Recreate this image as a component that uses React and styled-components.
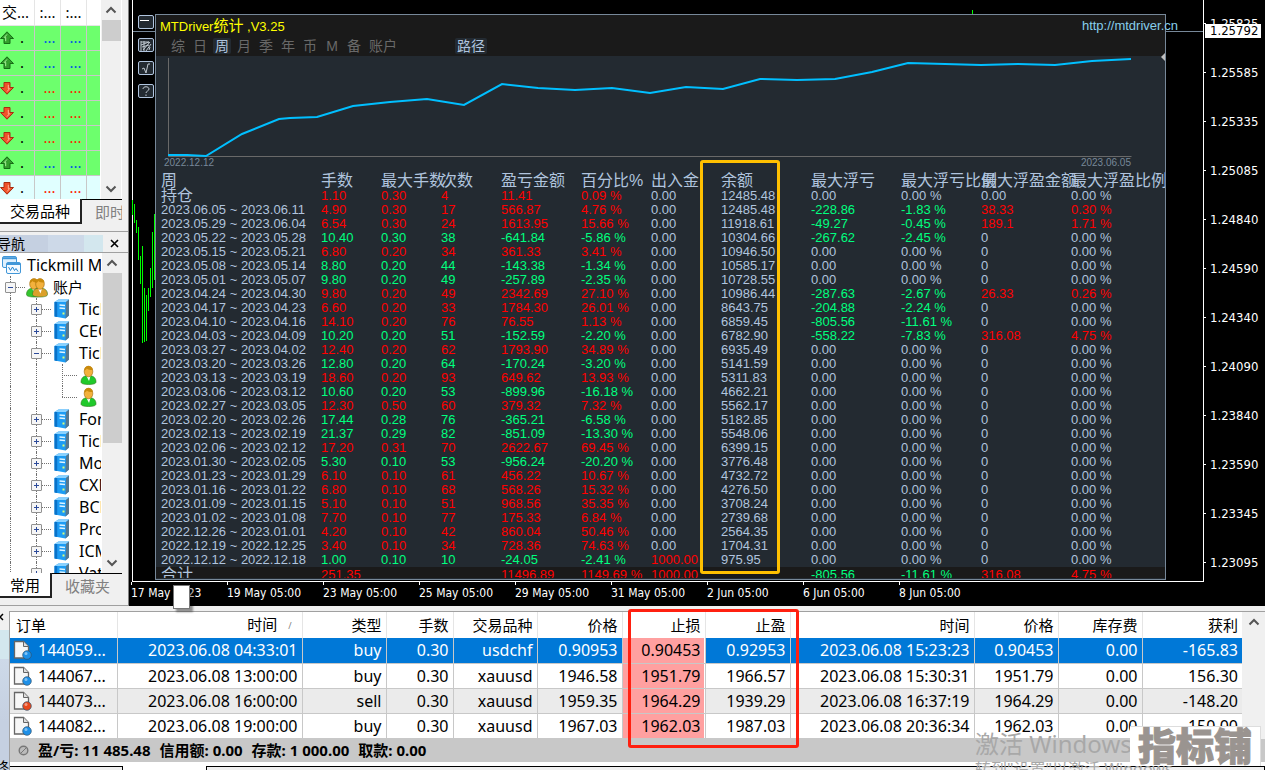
import React from 'react'
import styled, { createGlobalStyle, css } from 'styled-components'

const GlobalStyle = createGlobalStyle`
  * {
    box-sizing: border-box;
  }
  body {
    margin: 0;
    background: #f0f0f0;
    color: #000;
    font-family: 'Noto Sans', 'Noto Sans CJK SC', sans-serif;
    font-size: 15px;
    line-height: 20px;
  }
  button {
    margin: 0;
    padding: 0;
    border: 0;
    background: none;
    color: inherit;
    font: inherit;
    white-space: nowrap;
  }
  table {
    border-collapse: collapse;
    border-spacing: 0;
    table-layout: fixed;
  }
  th, td {
    padding: 0;
    font-weight: normal;
    text-align: left;
    white-space: nowrap;
  }
  svg {
    display: block;
    flex: none;
  }
`

const Page = styled.div`
  display: flex;
  flex-direction: column;
  height: 100vh;
  overflow: hidden;
`

const Workspace = styled.div`
  display: flex;
  flex: none;
`

/* ---------- sidebar ---------- */

const Sidebar = styled.aside`
  display: flex;
  flex-direction: column;
  width: 129px;
  flex: none;
  border-right: 1px solid #808080;
  border-bottom: 1px solid #a0a0a0;
  background: #f0f0f0;
`

const Scrolled = styled.div`
  display: flex;
  height: ${props => props.$height};
  width: 122px;
  overflow: hidden;
  background: #fff;
`

const ScrollBar = styled.div`
  display: flex;
  flex-direction: column;
  align-items: center;
  width: 20px;
  flex: none;
  margin-left: 1px;
  background: #f0f0f0;
`

const ScrollButton = styled.button`
  display: flex;
  align-items: center;
  justify-content: center;
  width: 20px;
  height: 20px;
  flex: none;
`

const Thumb = styled.div`
  width: 19px;
  height: ${props => props.$size};
  margin-bottom: auto;
  background: #cdcdcd;
`

const WatchTable = styled.table`
  width: 100px;
  flex: none;
  th, td {
    height: 25px;
    overflow: hidden;
    border-right: 1px solid #c8c8c8;
    border-bottom: 1px solid #c8c8c8;
    text-align: right;
    padding-right: 4px;
    line-height: 23px;
  }
  th {
    border-color: #e5e5e5;
    background: #fff;
    padding-left: 2px;
    text-align: left;
  }
  th + th {
    padding-left: 5px;
  }
  th:last-child, td:last-child {
    border-right: 0;
  }
`

const WatchRow = styled.tr`
  background: ${props => (props.$plain ? '#e0ffff' : '#6dff6d')};
  color: ${props => (props.$up ? '#0055e0' : '#ff1800')};
`

const Symbol = styled.div`
  display: flex;
  align-items: center;
  gap: 6px;
  color: #000;
`

const Tabs = styled.div`
  display: flex;
  width: 122px;
  height: 25px;
  overflow: hidden;
  background: #f0f0f0;
`

const Tab = styled.button`
  flex: none;
  padding: 0 10px;
  ${props =>
    props.$active
      ? css`
          border-right: 2px solid #222;
          border-bottom: 2px solid #222;
          background: #fff;
        `
      : css`
          flex: 1;
          padding-left: 13px;
          border-top: 1px solid #000;
          color: #808080;
          text-align: left;
        `}
`

const NavTitle = styled.div`
  display: flex;
  align-items: center;
  justify-content: space-between;
  margin-top: 7px;
  height: 22px;
  padding: 3px 9px 0 0;
  border-top: 1px solid #a0a0a0;
  border-bottom: 1px solid #a0a0a0;
  overflow: hidden;
  font-size: 14px;
`

const NavName = styled.span`
  width: 103px;
  height: 17px;
  line-height: 17px;
  text-indent: -3px;
  background: linear-gradient(90deg, #c5d0e1 48px, #cdd9e8 48px, #cdd9e8 84px, #d3e7ee 84px);
`

const Tree = styled.div`
  flex: 1;
  padding-top: 1px;
  overflow: hidden;
`

const Node = styled.div`
  display: flex;
  align-items: center;
  height: 22px;
  white-space: nowrap;
`

const NodeName = styled.span`
  font-size: 16px;
`

const Guide = styled.span`
  position: relative;
  display: flex;
  align-items: center;
  width: 26px;
  height: 22px;
  flex: none;
  padding-left: 5px;
  &::before {
    content: '';
    position: absolute;
    left: 10px;
    top: 0;
    bottom: ${props => (props.$last ? '11px' : '0')};
    border-left: 1px dotted #707070;
  }
  &::after {
    content: '';
    position: absolute;
    left: 10px;
    right: 1px;
    top: 11px;
    border-top: ${props => (props.$branch ? '1px dotted #707070' : '0')};
  }
`

const Expander = styled.button`
  position: relative;
  z-index: 1;
  width: 11px;
  height: 11px;
  border: 1px solid #919191;
  border-radius: 1px;
  background: #f6f6f6;
`

const NodeIcon = styled.span`
  flex: none;
  width: ${props => props.$width};
  padding-left: ${props => props.$pad || '0'};
`

/* ---------- price chart ---------- */

const ChartWindow = styled.section`
  flex: 1;
  min-width: 0;
  padding-left: 3px;
  background: #000;
  color: #fff;
  font-family: 'DejaVu Sans Condensed', 'DejaVu Sans', sans-serif;
`

const ChartRow = styled.div`
  display: flex;
`

const Plot = styled.div`
  position: relative;
  display: flex;
  flex: 1;
  min-width: 0;
  padding: 14px 37px 1px 0;
  border: solid #fff;
  border-width: 0 1px 1px;
`

const QuoteLine = styled.div`
  position: absolute;
  left: 0;
  right: 0;
  top: 31px;
  height: 1px;
  background: #778899;
`

const Candles = styled.svg`
  position: absolute;
  left: -1px;
  top: 0;
`

const TopTick = styled.span`
  position: absolute;
  right: 230px;
  top: 10px;
  width: 1px;
  height: 4px;
  background: #0f0;
`

const ToolColumn = styled.div`
  position: relative;
  display: flex;
  flex-direction: column;
  gap: 9px;
  width: 22px;
  padding: 1px 0 0 5px;
`

const Tool = styled.button`
  width: 16px;
  height: 14px;
  border: 1px solid #b0c4de;
  border-radius: 2px;
  background: #232a31;
`

const Panel = styled.div`
  position: relative;
  flex: 1;
  min-width: 0;
  border: 1px solid #778899;
  background: #232a31;
  color: #b0c4de;
  font-family: 'Liberation Sans', 'Noto Sans CJK SC', sans-serif;
  font-size: 13px;
  line-height: 14px;
`

const PanelHead = styled.header`
  height: 41px;
  background: #1a1a1a;
`

const TitleRow = styled.div`
  display: flex;
  justify-content: space-between;
  height: 23px;
  padding-left: 4px;
  line-height: 22px;
  color: #ff0;
  a {
    margin-right: -13px;
    color: #87ceeb;
    text-decoration: none;
    z-index: 1;
  }
`

const TitleCjk = styled.span`
  font-size: 15px;
`

const PeriodRow = styled.div`
  display: flex;
  padding-left: 13px;
`

const Period = styled.button`
  min-width: 18px;
  height: 16px;
  margin-right: 4px;
  padding: 0 2px;
  border-radius: 2px;
  background: ${props => (props.$active ? '#232a31' : 'none')};
  color: ${props => (props.$active ? '#b0c4de' : '#696969')};
  font-size: 14px;
  line-height: 16px;
`

const PathPeriod = styled(Period)`
  margin-left: 52px;
`

const Growth = styled.figure`
  margin: 0;
  padding: 1px 34px 0 12px;
  height: 116px;
  svg {
    width: 100%;
    height: 100px;
    overflow: visible;
  }
`

const Dates = styled.figcaption`
  display: flex;
  justify-content: space-between;
  margin-left: -4px;
  color: #778899;
  font-family: 'Liberation Sans Narrow', 'Liberation Sans', sans-serif;
  font-size: 10px;
  line-height: 12px;
`

const StatsClip = styled.div`
  height: 406px;
  overflow: hidden;
`

const StatsTable = styled.table`
  width: 100%;
  th, td {
    height: 14px;
  }
  th, td:first-child {
    padding-left: 5px;
  }
  thead th {
    height: 17px;
    padding: 1px 0 0;
    font-size: 16px;
  }
  thead th:first-child {
    padding-left: 5px;
  }
  tfoot {
    background: #1a1a1a;
  }
  tfoot th, tfoot td {
    height: 15px;
  }
`

const RowName = styled.th`
  font-size: ${props => (props.$cjk ? '16px' : '13px')};
`

const tones = { r: '#f00', g: '#00ff7f', n: '#b0c4de' }

const Stat = styled.td`
  color: ${props => tones[props.$tone]};
`

const BalanceMark = styled.div`
  position: absolute;
  left: 544px;
  top: 145px;
  width: 80px;
  bottom: 5px;
  border: 3px solid #ffc000;
  border-radius: 3px;
`

const EdgeMark = styled.svg`
  position: absolute;
  right: 0;
  top: 38px;
`

const PriceAxis = styled.div`
  position: relative;
  width: 61px;
  flex: none;
  height: 582px;
  overflow: hidden;
  ol {
    margin: -1px 0 0;
    padding: 0;
    list-style: none;
  }
`

const Price = styled.li`
  display: flex;
  align-items: center;
  gap: 4px;
  height: 49px;
  font-size: 13px;
  &::before {
    content: '';
    width: 2px;
    height: 1px;
    background: #fff;
  }
`

const LastPrice = styled.div`
  position: absolute;
  left: 1px;
  top: 24px;
  width: 56px;
  padding-left: 5px;
  background: #fff;
  color: #000;
  font-size: 13px;
  line-height: 14px;
`

const TimeAxis = styled.div`
  position: relative;
  display: flex;
  height: 24px;
  margin-left: -1px;
`

const Time = styled.span`
  width: 96px;
  flex: none;
  font-size: 12px;
  line-height: 17px;
  white-space: nowrap;
  &::before {
    content: '';
    display: block;
    width: 1px;
    height: 3px;
    background: #fff;
  }
`

const DragHandle = styled.div`
  position: absolute;
  left: 42px;
  top: 3px;
  z-index: 2;
  width: 17px;
  height: 24px;
  border: 1px solid #777;
  background: #fff;
  box-shadow: 3px 3px 2px rgba(0, 0, 0, 0.4);
`

/* ---------- terminal ---------- */

const Terminal = styled.section`
  position: relative;
  display: flex;
  flex: 1;
  margin-top: 5px;
  min-height: 0;
`

const Rail = styled.div`
  display: flex;
  flex-direction: column;
  justify-content: space-between;
  width: 9px;
  flex: none;
  overflow: hidden;
  background: linear-gradient(#f0f0f0 19px, #d3e7ee 19px, #d3e7ee 48px, #cdd9e8 48px, #c5d0e1 110px);
`

const RailName = styled.span`
  height: 10px;
  font-size: 14px;
  line-height: 14px;
  text-indent: -5px;
  white-space: nowrap;
`

const TerminalBody = styled.div`
  display: flex;
  flex-direction: column;
  flex: 1;
  min-width: 0;
  border-top: 1px solid #a0a0a0;
  border-left: 1px solid #a0a0a0;
  background: #fff;
`

const OrdersArea = styled.div`
  display: flex;
`

const OrdersTable = styled.table`
  flex: 1;
  width: 100%;
  background: #fff;
  th, td {
    height: 25px;
    padding-right: 4px;
    border-right: 1px solid #c8c8c8;
    text-align: right;
    font-size: 16px;
    line-height: 24px;
  }
  td {
    border-bottom: 1px solid #c8c8c8;
  }
  th {
    height: 26px;
    border-color: #e5e5e5;
    font-size: 15px;
  }
  th:first-child {
    padding-left: 6px;
    text-align: left;
  }
  th:last-child, td:last-child {
    border-right: 0;
  }
`

const OrderRow = styled.tr`
  background: ${props => (props.$selected ? '#0078d7' : props.$alt ? '#ebebeb' : '#fff')};
  color: ${props => (props.$selected ? '#fff' : '#000')};
`

const Ticket = styled.div`
  display: flex;
  align-items: center;
  gap: 6px;
  height: 24px;
  padding-left: 3px;
`

const StopLoss = styled.td`
  background: #ffa0a0;
  color: #000;
  box-shadow: inset -1px 0 #fff;
`

const SortMark = styled.span`
  padding: 0 6px 0 11px;
  color: #808080;
  font-size: 9px;
  vertical-align: 1px;
`

const Summary = styled.div`
  display: flex;
  align-items: center;
  gap: 9px;
  height: 25px;
  padding-left: 8px;
  background: #c8c8c8;
  font-weight: bold;
  white-space: nowrap;
`

const BottomTabs = styled.div`
  display: flex;
  margin-top: 4px;
  height: 4px;
`

const BottomTab = styled.div`
  width: ${props => props.$width};
  flex: ${props => (props.$width ? 'none' : '1')};
  border: solid #000;
  border-width: 1px 1px 0 0;
  background: #f0f0f0;
`

const ActiveBottomTab = styled.div`
  width: 84px;
  border-right: 1px solid #000;
`

const TerminalScroll = styled(ScrollBar)`
  width: 23px;
  margin: 0;
`

const StopMark = styled.div`
  position: absolute;
  left: 628px;
  top: -2px;
  width: 171px;
  height: 139px;
  border: 3px solid #ff2010;
  border-radius: 3px;
`

const Activation = styled.div`
  position: absolute;
  right: 66px;
  bottom: -10px;
  width: 224px;
  color: #a8a8a8;
  font-size: 16px;
  line-height: 22px;
  white-space: nowrap;
  strong {
    display: block;
    font-size: 24px;
    font-weight: normal;
    line-height: 28px;
  }
`

const Brand = styled.div`
  position: absolute;
  right: 4px;
  bottom: 4px;
  height: 40px;
  padding: 0 8px;
  border-top: 1px solid #ddd;
  border-right: 1px solid #ddd;
  background: #fff;
  color: #9a9490;
  font-family: 'Noto Sans CJK SC', sans-serif;
  font-size: 38px;
  font-weight: 900;
  line-height: 34px;
  -webkit-text-stroke: 1px #9a9490;
`

/* ---------- icons ---------- */

const Chevron = ({ down }) => (
  <svg width="12" height="8" viewBox="0 0 12 8">
    <path d={down ? 'M1.5 1.5 6 6l4.5-4.5' : 'M1.5 6.5 6 2l4.5 4.5'} fill="none" stroke="#555" strokeWidth="2" />
  </svg>
)

const Arrow = ({ up }) => (
  <svg width="14" height="14" viewBox="0 0 14 14">
    <g transform={up ? undefined : 'rotate(180 7 7)'}>
      <path d="M7 .8 13.500 7.500H10v5H4v-5H.5z" fill={up ? '#33a02c' : '#f0522a'} stroke={up ? '#176b17' : '#a82c10'} />
      <path d="M7 3.400 4.400 6.400h1.300v3.800" fill="none" stroke={up ? '#a9f09b' : '#ffb597'} />
    </g>
  </svg>
)

const ServerIcon = () => (
  <svg width="16" height="20" viewBox="0 0 16 20">
    <path d="M.5 3 4.500.5H15v16L11.500 19.500.5 17.500z" fill="#1c9cf4" />
    <path d="M.5 3 4.500.5H15L12 3z" fill="#8ad2ff" />
    <path d="M12 3 15 .5v16l-3.500 3z" fill="#56788f" />
    <path d="M.5 3h2.700v15L.5 17.500z" fill="#0a72c8" />
    <path d="M5.500 6 11 6.500M5.500 9 11 9.500" stroke="#dff4ff" strokeWidth="1.400" />
    <path d="M8.500 14.500h2" stroke="#d9ff7a" strokeWidth="2" />
  </svg>
)

const TerminalIcon = () => (
  <svg width="20" height="20" viewBox="0 0 20 20">
    <rect x="1.5" y="1.5" width="14" height="11" rx="1.5" fill="#dff0fd" stroke="#4197d8" />
    <path d="M2 3.2h13" stroke="#4197d8" strokeWidth="2" />
    <rect x="5.5" y="7.5" width="14" height="11" rx="1.5" fill="#f4faff" stroke="#4197d8" />
    <path d="M6 9h13" stroke="#4197d8" strokeWidth="2" />
    <path d="m7.5 12 2 3.5 2-3.500 2 3.500 1.500-2 2 3" fill="none" stroke="#2384cf" />
  </svg>
)

const Person = ({ body }) => (
  <g>
    <path d="M.5 17c0-4 2.500-6.500 7.500-6.500s7.500 2.500 7.500 6.500c0 1.500-2.500 2.500-7.500 2.500S.5 18.500.5 17z" fill={body} stroke="#2f7a1d" strokeWidth=".6" />
    <path d="m6 11 2.500 5L10 11z" fill="#fff" />
    <ellipse cx="8" cy="6.500" rx="4.300" ry="5.300" fill="#f3b13c" stroke="#9a6508" strokeWidth=".6" />
    <path d="M3.800 5.500C3.800 2 6 1 8 1s4.300 1 4.300 4c-3 0-5-.5-6-1.500-.3 1-1.300 1.700-2.500 2z" fill="#c98a0c" />
  </g>
)

const UserIcon = () => (
  <svg width="17" height="20" viewBox="0 0 16 20"><Person body="#20c92b" /></svg>
)

const UsersIcon = () => (
  <svg width="22" height="21" viewBox="0 0 22 20">
    <Person body="#35c52f" />
    <g transform="translate(6 0)"><Person body="#dba02a" /></g>
  </svg>
)

const OrderIcon = ({ color }) => (
  <svg width="19" height="20" viewBox="0 0 19 20">
    <path d="M1.500 1.500h9l5 5v11.500h-14z" fill="#f7f7f7" stroke="#666" strokeWidth="1.300" />
    <path d="M10.500 1.500v5h5" fill="#ddd" stroke="#666" />
    <circle cx="14" cy="15" r="4.300" fill={color} stroke="#31536e" strokeWidth=".7" />
    <circle cx="13" cy="13.500" r="1.500" fill="#fff" opacity=".45" />
  </svg>
)

const toolPaths = {
  minimize: 'M1 4.500h9',
  chart: 'M2 2v10M2 3h8M5 2v10M2 6l8-3M4 11l7-8M3 8l7-2M7 12l5-7M10 11l1-3',
  check: 'M3 7l2-1 2 5 2-9h2',
  help: 'M4 4C4 1 10 1 10 4c0 2-3 2-3 4M7 9.500V11',
}

/* ---------- data ---------- */

const watch = [true, true, false, false, false, true, false]

const servers = ['For', 'Tickmill', 'Monex', 'CXM', 'BCR', 'Pro', 'ICMarkets', 'Vatee']

const prices = ['1.25825', '1.25585', '1.25335', '1.25085', '1.24840', '1.24590', '1.24340', '1.24090', '1.23840', '1.23590', '1.23345', '1.23095']

const times = ['17 May 2023', '19 May 05:00', '23 May 05:00', '25 May 05:00', '29 May 05:00', '31 May 05:00', '2 Jun 05:00', '6 Jun 05:00', '8 Jun 05:00']

// x, top, bottom
const candles = [
  [0, 200, 215], [2, 204, 223], [4, 220, 233], [6, 227, 260], [8, 256, 284], [10, 246, 343],
  [12, 288, 342], [14, 295, 341], [16, 288, 311], [18, 268, 297], [20, 232, 288], [22, 214, 280],
]

const growth = '0,98 19,98 38,99 74,77 111,62 122,61 149,60 185,49 222,45 259,42 296,48 334,27 370,31 407,33 444,31 482,36 518,30 555,32 592,22 629,23 667,22 704,15 740,6 777,7 813,8 850,7 887,8 924,4 963,2'

const periods = ['综', '日', '周', '月', '季', '年', '币', 'M', '备', '账户']

const summary = ['盈/亏: 11 485.48', '信用额: 0.00', '存款: 1 000.00', '取款: 0.00']

const statHeads = ['周', '手数', '最大手数', '次数', '盈亏金额', '百分比%', '出入金', '余额', '最大浮亏', '最大浮亏比例', '最大浮盈金额', '最大浮盈比例']
const statWidths = [165, 60, 60, 60, 80, 70, 70, 90, 90, 80, 90]

// name|lots|max lots|count|profit|percent|balance|drawdown|drawdown %|float profit|float profit %
const stats = `持仓|1.10|0.30|4|11.41|0.09|12485.48|0.00|0.00|0.00|0.00
2023.06.05 ~ 2023.06.11|4.90|0.30|17|566.87|4.76|12485.48|-228.86|-1.83|38.33|0.30
2023.05.29 ~ 2023.06.04|6.54|0.30|24|1613.95|15.66|11918.61|-49.27|-0.45|189.1|1.71
2023.05.22 ~ 2023.05.28|10.40|0.30|38|-641.84|-5.86|10304.66|-267.62|-2.45|0|0.00
2023.05.15 ~ 2023.05.21|6.80|0.20|34|361.33|3.41|10946.50|0.00|0.00|0|0.00
2023.05.08 ~ 2023.05.14|8.80|0.20|44|-143.38|-1.34|10585.17|0.00|0.00|0|0.00
2023.05.01 ~ 2023.05.07|9.80|0.20|49|-257.89|-2.35|10728.55|0.00|0.00|0|0.00
2023.04.24 ~ 2023.04.30|9.80|0.20|49|2342.69|27.10|10986.44|-287.63|-2.67|26.33|0.26
2023.04.17 ~ 2023.04.23|6.60|0.20|33|1784.30|26.01|8643.75|-204.88|-2.24|0|0.00
2023.04.10 ~ 2023.04.16|14.10|0.20|76|76.55|1.13|6859.45|-805.56|-11.61|0|0.00
2023.04.03 ~ 2023.04.09|10.20|0.20|51|-152.59|-2.20|6782.90|-558.22|-7.83|316.08|4.75
2023.03.27 ~ 2023.04.02|12.40|0.20|62|1793.90|34.89|6935.49|0.00|0.00|0|0.00
2023.03.20 ~ 2023.03.26|12.80|0.20|64|-170.24|-3.20|5141.59|0.00|0.00|0|0.00
2023.03.13 ~ 2023.03.19|18.60|0.20|93|649.62|13.93|5311.83|0.00|0.00|0|0.00
2023.03.06 ~ 2023.03.12|10.60|0.20|53|-899.96|-16.18|4662.21|0.00|0.00|0|0.00
2023.02.27 ~ 2023.03.05|12.30|0.50|60|379.32|7.32|5562.17|0.00|0.00|0|0.00
2023.02.20 ~ 2023.02.26|17.44|0.28|76|-365.21|-6.58|5182.85|0.00|0.00|0|0.00
2023.02.13 ~ 2023.02.19|21.37|0.29|82|-851.09|-13.30|5548.06|0.00|0.00|0|0.00
2023.02.06 ~ 2023.02.12|17.20|0.31|70|2622.67|69.45|6399.15|0.00|0.00|0|0.00
2023.01.30 ~ 2023.02.05|5.30|0.10|53|-956.24|-20.20|3776.48|0.00|0.00|0|0.00
2023.01.23 ~ 2023.01.29|6.10|0.10|61|456.22|10.67|4732.72|0.00|0.00|0|0.00
2023.01.16 ~ 2023.01.22|6.80|0.10|68|568.26|15.32|4276.50|0.00|0.00|0|0.00
2023.01.09 ~ 2023.01.15|5.10|0.10|51|968.56|35.35|3708.24|0.00|0.00|0|0.00
2023.01.02 ~ 2023.01.08|7.70|0.10|77|175.33|6.84|2739.68|0.00|0.00|0|0.00
2022.12.26 ~ 2023.01.01|4.20|0.10|42|860.04|50.46|2564.35|0.00|0.00|0|0.00
2022.12.19 ~ 2022.12.25|3.40|0.10|34|728.36|74.63|1704.31|0.00|0.00|0|0.00
2022.12.12 ~ 2022.12.18|1.00|0.10|10|-24.05|-2.41|975.95|0.00|0.00|0|0.00`
  .split('\n')
  .map(line => line.split('|'))

const orderHeads = ['订单', '时间', '类型', '手数', '交易品种', '价格', '止损', '止盈', '时间', '价格', '库存费', '获利']
const orderWidths = [107, 185, 84, 67, 84, 85, 83, 85, 184, 84, 84]

const orders = [
  ['144059...', '2023.06.08 04:33:01', 'buy', '0.30', 'usdchf', '0.90953', '0.90453', '0.92953', '2023.06.08 15:23:23', '0.90453', '0.00', '-165.83'],
  ['144067...', '2023.06.08 13:00:00', 'buy', '0.30', 'xauusd', '1946.58', '1951.79', '1966.57', '2023.06.08 15:30:31', '1951.79', '0.00', '156.30'],
  ['144073...', '2023.06.08 16:00:00', 'sell', '0.30', 'xauusd', '1959.35', '1964.29', '1939.29', '2023.06.08 16:37:19', '1964.29', '0.00', '-148.20'],
  ['144082...', '2023.06.08 19:00:00', 'buy', '0.30', 'xauusd', '1967.03', '1962.03', '1987.03', '2023.06.08 20:36:34', '1962.03', '0.00', '150.00'],
]

const sign = value => (Number(value) > 0 ? 'r' : Number(value) < 0 ? 'g' : 'n')

/* ---------- parts ---------- */

function MarketWatch() {
  return (
    <>
      <Scrolled $height="199px">
        <WatchTable>
          <colgroup><col width="34" /><col width="26" /><col width="26" /><col width="14" /></colgroup>
          <thead>
            <tr><th>交...</th><th>:...</th><th>:...</th><th /></tr>
          </thead>
          <tbody>
            {watch.map((up, i) => (
              <WatchRow key={i} $up={up} $plain={i === 6}>
                <td><Symbol><Arrow up={up} />.</Symbol></td><td>...</td><td>...</td><td />
              </WatchRow>
            ))}
          </tbody>
        </WatchTable>
        <ScrollBar>
          <ScrollButton aria-label="up"><Chevron /></ScrollButton>
          <Thumb $size="21px" />
          <ScrollButton aria-label="down"><Chevron down /></ScrollButton>
        </ScrollBar>
      </Scrolled>
      <Tabs>
        <Tab $active>交易品种</Tab>
        <Tab>即时图</Tab>
      </Tabs>
    </>
  )
}

function Toggle({ open }) {
  return (
    <Expander aria-label={open ? 'collapse' : 'expand'}>
      <svg width="9" height="9" viewBox="0 0 9 9">
        <path d={open ? 'M2 4.500h5' : 'M2 4.500h5M4.500 2v5'} stroke="#2c4a9a" />
      </svg>
    </Expander>
  )
}

function ServerNode({ name, open }) {
  return (
    <Node>
      <Guide />
      <Guide $branch><Toggle open={open} /></Guide>
      <NodeIcon $width="27px" $pad="2px"><ServerIcon /></NodeIcon>
      <NodeName>{name}</NodeName>
    </Node>
  )
}

function UserNode({ last }) {
  return (
    <Node>
      <Guide />
      <Guide />
      <Guide $branch $last={last} />
      <NodeIcon $width="20px" $pad="2px"><UserIcon /></NodeIcon>
    </Node>
  )
}

function Navigator() {
  return (
    <>
      <NavTitle>
        <NavName>导航</NavName>
        <button aria-label="close">
          <svg width="9" height="9" viewBox="0 0 9 9"><path d="m1 1 7 7M8 1 1 8" stroke="#000" strokeWidth="1.600" /></svg>
        </button>
      </NavTitle>
      <Scrolled $height="320px">
        <Tree>
          <Node>
            <NodeIcon $width="27px" $pad="1px"><TerminalIcon /></NodeIcon>
            <NodeName>Tickmill MT4</NodeName>
          </Node>
          <Node>
            <Guide $branch><Toggle open /></Guide>
            <NodeIcon $width="27px"><UsersIcon /></NodeIcon>
            账户
          </Node>
          <ServerNode name="Tickmill" />
          <ServerNode name="CEO" />
          <ServerNode name="Tickmill" open />
          <UserNode />
          <UserNode last />
          {servers.map(name => <ServerNode key={name} name={name} />)}
        </Tree>
        <ScrollBar>
          <ScrollButton aria-label="up"><Chevron /></ScrollButton>
          <Thumb $size="170px" />
          <ScrollButton aria-label="down"><Chevron down /></ScrollButton>
        </ScrollBar>
      </Scrolled>
      <Tabs>
        <Tab $active>常用</Tab>
        <Tab>收藏夹</Tab>
      </Tabs>
    </>
  )
}

function StatsRow({ row }) {
  const [name, lots, maxLots, count, profit, percent, balance, down, downPct, up, upPct] = row
  const tone = sign(profit)
  return (
    <tr>
      <RowName scope="row" $cjk={name === '持仓'}>{name}</RowName>
      <Stat $tone={tone}>{lots}</Stat>
      <Stat $tone={tone}>{maxLots}</Stat>
      <Stat $tone={tone}>{count}</Stat>
      <Stat $tone={tone}>{profit}</Stat>
      <Stat $tone={tone}>{percent} %</Stat>
      {name.startsWith('2022.12.12') ? <Stat $tone="r">1000.00</Stat> : <Stat $tone="n">0.00</Stat>}
      <Stat $tone="n">{balance}</Stat>
      <Stat $tone={sign(down)}>{down}</Stat>
      <Stat $tone={sign(downPct)}>{downPct} %</Stat>
      <Stat $tone={sign(up)}>{up}</Stat>
      <Stat $tone={sign(upPct)}>{upPct} %</Stat>
    </tr>
  )
}

function StatsPanel() {
  return (
    <Panel>
      <PanelHead>
        <TitleRow>
          <span>MTDriver<TitleCjk>统计</TitleCjk> ,V3.25</span>
          <a href="http://mtdriver.cn">http://mtdriver.cn</a>
        </TitleRow>
        <PeriodRow>
          {periods.map(name => <Period key={name} $active={name === '周'}>{name}</Period>)}
          <PathPeriod $active>路径</PathPeriod>
        </PeriodRow>
      </PanelHead>
      <Growth>
        <svg viewBox="0 0 963 100" preserveAspectRatio="none">
          <path d="M.5 1v98.500h963" fill="none" stroke="#696969" vectorEffect="non-scaling-stroke" />
          <polyline points={growth} fill="none" stroke="#00bfff" strokeWidth="2" vectorEffect="non-scaling-stroke" />
        </svg>
        <Dates><span>2022.12.12</span><span>2023.06.05</span></Dates>
      </Growth>
      <StatsClip>
        <StatsTable>
          <colgroup>
            {statWidths.map((width, i) => <col key={i} width={width} />)}
            <col />
          </colgroup>
          <thead>
            <tr>{statHeads.map(head => <th key={head} scope="col">{head}</th>)}</tr>
          </thead>
          <tbody>
            {stats.map(row => <StatsRow key={row[0]} row={row} />)}
          </tbody>
          <tfoot>
            <tr>
              <RowName scope="row" $cjk>合计</RowName>
              <Stat $tone="r" colSpan="3">251.35</Stat>
              <Stat $tone="r">11496.89</Stat>
              <Stat $tone="r">1149.69 %</Stat>
              <Stat $tone="r" colSpan="2">1000.00</Stat>
              <Stat $tone="g">-805.56</Stat>
              <Stat $tone="g">-11.61 %</Stat>
              <Stat $tone="r">316.08</Stat>
              <Stat $tone="r">4.75 %</Stat>
            </tr>
          </tfoot>
        </StatsTable>
      </StatsClip>
      <BalanceMark />
      <EdgeMark width="4" height="8" viewBox="0 0 4 8"><path d="M4 0v8L0 4z" fill="#c0c0c0" /></EdgeMark>
    </Panel>
  )
}

function Chart() {
  return (
    <ChartWindow>
      <ChartRow>
        <Plot>
          <QuoteLine />
          <TopTick />
          <Candles width="24" height="350">
            {candles.map(([x, top, bottom]) => (
              <path key={x} d={`M${x + 0.5} ${top}V${bottom}`} stroke="#0f0" />
            ))}
          </Candles>
          <ToolColumn>
            {Object.entries(toolPaths).map(([name, d]) => (
              <Tool key={name} aria-label={name}>
                <svg width="14" height="12" viewBox="0 0 14 12">
                  <path d={d} fill="none" stroke={name === 'minimize' ? '#fff' : '#c0c8d0'} />
                </svg>
              </Tool>
            ))}
          </ToolColumn>
          <StatsPanel />
        </Plot>
        <PriceAxis>
          <ol>{prices.map(price => <Price key={price}>{price}</Price>)}</ol>
          <LastPrice>1.25792</LastPrice>
        </PriceAxis>
      </ChartRow>
      <TimeAxis>
        {times.map(time => <Time key={time}>{time}</Time>)}
        <DragHandle />
      </TimeAxis>
    </ChartWindow>
  )
}

function Orders() {
  return (
    <Terminal>
      <Rail>
        <svg width="9" height="14" viewBox="0 0 9 14"><path d="m-3 3 6 6M3 3l-6 6" stroke="#000" strokeWidth="1.500" /></svg>
        <RailName>终端</RailName>
      </Rail>
      <TerminalBody>
        <OrdersArea>
          <OrdersTable>
            <colgroup>
              {orderWidths.map((width, i) => <col key={i} width={width} />)}
              <col />
            </colgroup>
            <thead>
              <tr>
                {orderHeads.map((head, i) => (
                  <th key={i} scope="col">{head}{i === 1 && <SortMark>/</SortMark>}</th>
                ))}
              </tr>
            </thead>
            <tbody>
              {orders.map((order, row) => (
                <OrderRow key={order[0]} $selected={row === 0} $alt={row === 2}>
                  {order.map((value, i) => {
                    if (i === 0) {
                      return (
                        <td key={i}>
                          <Ticket><OrderIcon color={order[2] === 'sell' ? '#e8481c' : '#1e90e8'} />{value}</Ticket>
                        </td>
                      )
                    }
                    return i === 6 ? <StopLoss key={i}>{value}</StopLoss> : <td key={i}>{value}</td>
                  })}
                </OrderRow>
              ))}
            </tbody>
          </OrdersTable>
          <TerminalScroll>
            <ScrollButton aria-label="up"><Chevron /></ScrollButton>
          </TerminalScroll>
        </OrdersArea>
        <Summary>
          <svg width="11" height="11" viewBox="0 0 11 11">
            <circle cx="5.500" cy="5.500" r="4.300" fill="#bbb" stroke="#777" strokeWidth="1.400" />
            <path d="m3 8 5-5" stroke="#777" />
          </svg>
          {summary.map(item => <span key={item}>{item}</span>)}
        </Summary>
        <BottomTabs>
          <BottomTab $width="113px" />
          <ActiveBottomTab />
          <BottomTab />
        </BottomTabs>
      </TerminalBody>
      <StopMark />
      <Activation>
        <strong>激活 Windows</strong>
        转到"设置"以激活 Windows。
      </Activation>
      <Brand>指标铺</Brand>
    </Terminal>
  )
}

function App() {
  return (
    <Page>
      <GlobalStyle />
      <Workspace>
        <Sidebar>
          <MarketWatch />
          <Navigator />
        </Sidebar>
        <Chart />
      </Workspace>
      <Orders />
    </Page>
  )
}

export default App
